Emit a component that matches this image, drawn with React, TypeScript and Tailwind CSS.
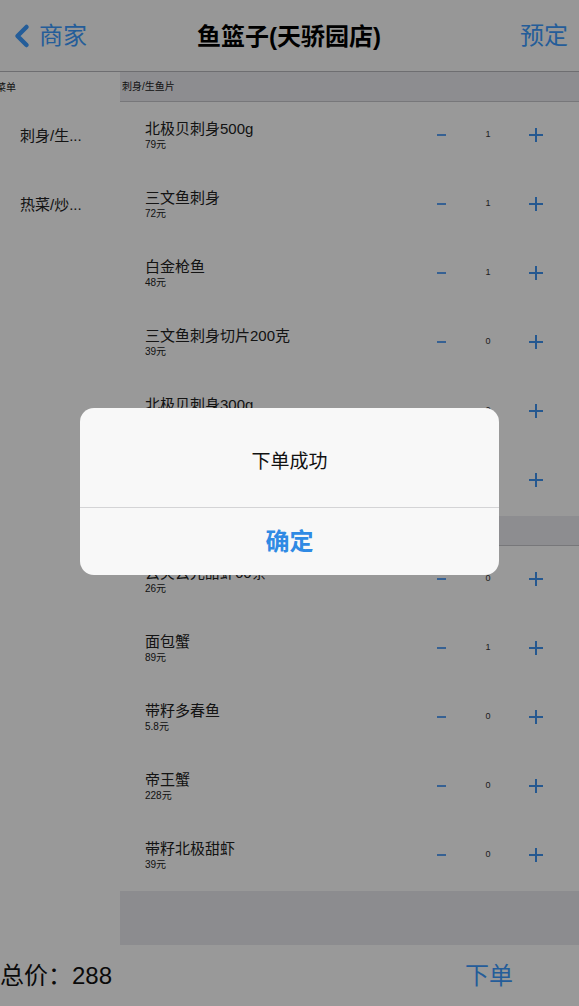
import { ChevronLeft } from "lucide-react";

type Dish = { name: string; price: string; count: number };

const sections: { title: string; dishes: Dish[] }[] = [
  {
    title: "刺身/生鱼片",
    dishes: [
      { name: "北极贝刺身500g", price: "79元", count: 1 },
      { name: "三文鱼刺身", price: "72元", count: 1 },
      { name: "白金枪鱼", price: "48元", count: 1 },
      { name: "三文鱼刺身切片200克", price: "39元", count: 0 },
      { name: "北极贝刺身300g", price: "49元", count: 0 },
      { name: "甜虾刺身", price: "36元", count: 0 },
    ],
  },
  {
    title: "热菜/炒菜",
    dishes: [
      { name: "云夹云光甜虾60条", price: "26元", count: 0 },
      { name: "面包蟹", price: "89元", count: 1 },
      { name: "带籽多春鱼", price: "5.8元", count: 0 },
      { name: "帝王蟹", price: "228元", count: 0 },
      { name: "带籽北极甜虾", price: "39元", count: 0 },
    ],
  },
];

const categories = ["刺身/生...", "热菜/炒..."];

function DishRow({ dish }: { dish: Dish }) {
  return (
    <div className="flex h-[69px] items-center bg-white">
      <div className="flex-1 pl-[25px] pb-[2px]">
        <p className="text-[15px] leading-[18px] text-[#222]">{dish.name}</p>
        <p className="text-[10px] leading-[13px] text-[#222]">{dish.price}</p>
      </div>
      <div className="flex items-center pb-[3px]">
        <div className="flex w-[30px] justify-center">
          <span className="block h-[2px] w-[9px] bg-[#5aa2f5]" />
        </div>
        <div className="w-[64px] text-center text-[9px] text-[#333]">
          {dish.count}
        </div>
        <div className="relative ml-[9px] mr-[36px] h-[14px] w-[14px]">
          <span className="absolute left-0 top-[6px] h-[2px] w-[14px] bg-[#3f93f0]" />
          <span className="absolute left-[6px] top-0 h-[14px] w-[2px] bg-[#3f93f0]" />
        </div>
      </div>
    </div>
  );
}

export default function App() {
  return (
    <div
      className="relative flex h-[1006px] w-[579px] flex-col overflow-hidden bg-white"
      style={{ fontFamily: '"Liberation Sans", "Noto Sans CJK SC", sans-serif' }}
    >
      {/* nav bar */}
      <div className="relative flex h-[72px] shrink-0 items-center border-b border-[#b8b8bc] bg-[#fcfcfc]">
        <div className="flex items-center pl-[4px] text-[#3d9bff]">
          <ChevronLeft size={36} strokeWidth={3} />
          <span className="-ml-[1px] text-[24px]">商家</span>
        </div>
        <h1 className="absolute left-[289px] top-[37px] -translate-x-1/2 -translate-y-1/2 text-[24px] font-bold text-black">
          鱼篮子(天骄园店)
        </h1>
        <span className="ml-auto pr-[11px] text-[24px] text-[#3d9bff]">预定</span>
      </div>

      {/* content */}
      <div className="flex flex-1 overflow-hidden">
        <div className="w-[120px] shrink-0 bg-white">
          <div className="flex h-[30px] items-center -ml-[4px] text-[10px] text-[#222]">
            菜单
          </div>
          {categories.map((c) => (
            <div
              key={c}
              className="flex h-[69px] items-center pl-[20px] text-[15px] text-[#222]"
            >
              {c}
            </div>
          ))}
        </div>

        <div className="flex-1 bg-[#eaeaef]">
          {sections.map((s) => (
            <div key={s.title}>
              <div className="flex h-[30px] items-center border-b border-[#c6c6cb] bg-[#ececf1] pl-[2px] text-[10px] text-[#222]">
                {s.title}
              </div>
              {s.dishes.map((d) => (
                <DishRow key={d.name} dish={d} />
              ))}
            </div>
          ))}
        </div>
      </div>

      {/* bottom bar */}
      <div className="flex h-[61px] shrink-0 items-center bg-white">
        <span className="text-[24px] text-[#111]">总价：288</span>
        <span className="ml-auto mr-[66px] text-[24px] text-[#3d9bff]">下单</span>
      </div>

      {/* dimming overlay */}
      <div className="absolute inset-0 bg-black/40" />

      {/* alert */}
      <div className="absolute left-[80px] top-[408px] w-[419px] overflow-hidden rounded-[14px] bg-[#f8f8f8]">
        <div className="flex h-[99px] items-center justify-center pt-[10px] text-[19px] text-[#111]">
          下单成功
        </div>
        <div className="h-px bg-[#d4d4d6]" />
        <div className="flex h-[67px] items-center justify-center text-[24px] font-bold text-[#2f8ae4]">
          确定
        </div>
      </div>
    </div>
  );
}
